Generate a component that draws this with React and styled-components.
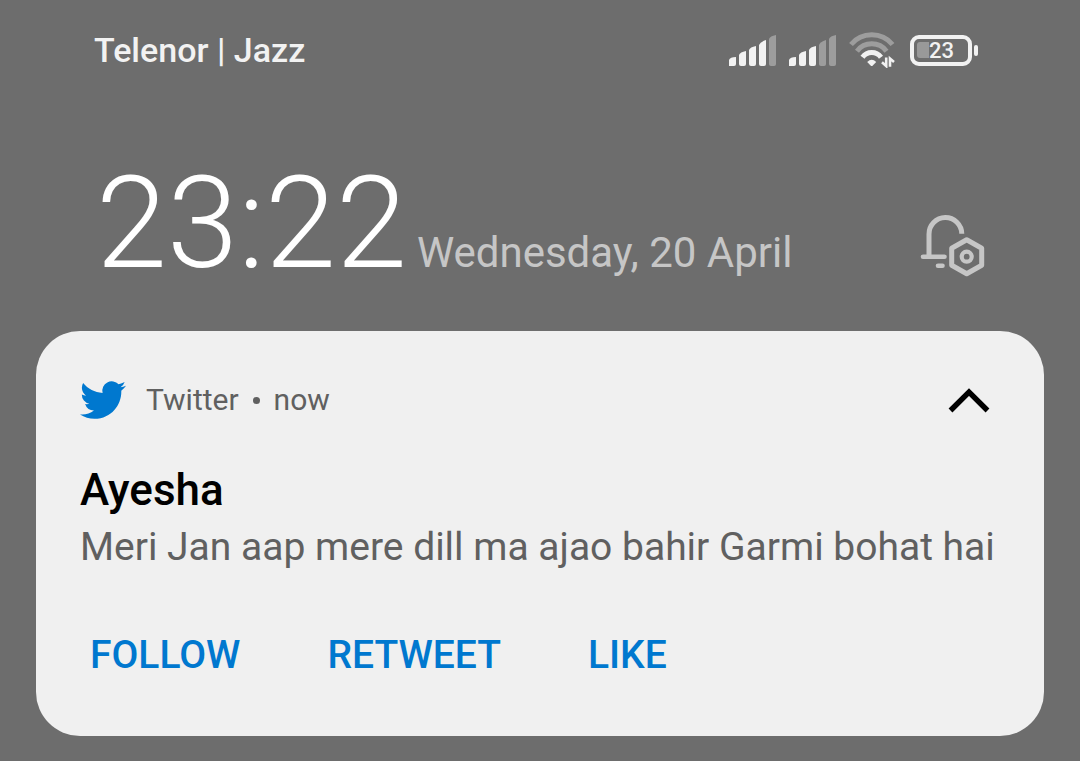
import React from 'react'
import styled, { createGlobalStyle } from 'styled-components'

const bars = [
    'M0 31V25Q1 22 7 22V29Q7 31 5 31H2Q0 31 0 31Z',
    'M10 29V20Q11 17 17 16V29Q17 31 15 31H12Q10 31 10 29Z',
    'M20 29V15Q21 12 27 11V29Q27 31 25 31H22Q20 31 20 29Z',
    'M30 29V10Q31 7 37 5V29Q37 31 35 31H32Q30 31 30 29Z',
    'M40 29V4Q41 1 47 0V29Q47 31 45 31H42Q40 31 40 29Z',
]

const Signal = ({ level }) => (
    <svg width="48" height="31" viewBox="0 0 48 31" aria-label="Signal">
        {bars.map((d, i) => (
            <path key={d} d={d} fill={i < level ? '#f2f2f2' : '#9d9d9d'} />
        ))}
    </svg>
)

const Wifi = () => (
    <svg width="49" height="36" viewBox="0 0 49 36" fill="none" aria-label="Wi-Fi">
        <path d="M2 12.5A27 27 0 0 1 43.5 12.5" stroke="#9d9d9d" strokeWidth="5" />
        <path d="M8 19.2A18.5 18.5 0 0 1 37.5 19.2" stroke="#9d9d9d" strokeWidth="5" />
        <path d="M13.5 25.2A11.5 11.5 0 0 1 32 25.2" stroke="#f2f2f2" strokeWidth="5" />
        <path d="M18.2 30Q22.7 25.5 27.2 30L23.8 33.6Q22.7 34.6 21.6 33.6Z" fill="#f2f2f2" />
        <path d="M37.2 25.5V34L33 30.2" stroke="#f2f2f2" strokeWidth="2.6" />
        <path d="M41 34.8V26.6L45 30" stroke="#f2f2f2" strokeWidth="2.6" />
    </svg>
)

const BellSettings = () => (
    <svg width="68" height="66" viewBox="0 0 68 66" fill="none" stroke="#c6c6c6" strokeWidth="5" aria-hidden="true">
        <path d="M11 44V22.2A16.4 16.4 0 0 1 43.8 21.8" />
        <path d="M5 44.8H26.5M20 53.8H24.5" strokeLinecap="round" strokeWidth="4.6" />
        <path d="M48.7 27.7L63.7 36.2V53.2L48.7 61.7L33.7 53.2V36.2Z" strokeLinejoin="round" />
        <circle cx="48.7" cy="44.7" r="5" strokeWidth="4.2" />
    </svg>
)

const Bird = () => (
    <svg width="46" height="46" viewBox="0 0 24 24" fill="#0078cf" aria-hidden="true">
        <path d="M23.953 4.57a10 10 0 01-2.825.775 4.958 4.958 0 002.163-2.723c-.951.555-2.005.959-3.127 1.184a4.92 4.92 0 00-8.384 4.482C7.69 8.095 4.067 6.13 1.64 3.162a4.822 4.822 0 00-.666 2.475c0 1.71.87 3.213 2.188 4.096a4.904 4.904 0 01-2.228-.616v.06a4.923 4.923 0 003.946 4.827 4.996 4.996 0 01-2.212.085 4.936 4.936 0 004.604 3.417 9.867 9.867 0 01-6.102 2.105c-.39 0-.779-.023-1.17-.067a13.995 13.995 0 007.557 2.209c9.053 0 13.998-7.496 13.998-13.985 0-.21 0-.42-.015-.63A9.935 9.935 0 0024 4.59z" />
    </svg>
)

const App = () => {
    return (
        <Container>
            <GlobalStyle />
            <StatusBar>
                <Carrier>Telenor | Jazz</Carrier>
                <StatusIcons>
                    <Signal level={4} />
                    <Signal level={3} />
                    <Wifi />
                    <Battery>
                        <BatteryBody>
                            <BatteryLevel />
                            23
                        </BatteryBody>
                        <BatteryTip />
                    </Battery>
                </StatusIcons>
            </StatusBar>
            <Header>
                <Time>23:22</Time>
                <Today>Wednesday, 20 April</Today>
                <SettingsButton aria-label="Notification settings">
                    <BellSettings />
                </SettingsButton>
            </Header>
            <Card>
                <CardTop>
                    <Bird />
                    <Source>
                        <span>Twitter</span>
                        <Dot />
                        <span>now</span>
                    </Source>
                    <IconButton aria-label="Collapse">
                        <svg width="42" height="26" viewBox="0 0 42 26" fill="none" aria-hidden="true">
                            <path d="M2.5 23.5L21 5L39.5 23.5" stroke="#000" strokeWidth="5.4" />
                        </svg>
                    </IconButton>
                </CardTop>
                <Title>Ayesha</Title>
                <Message>Meri Jan aap mere dill ma ajao bahir Garmi bohat hai</Message>
                <Actions>
                    <Action>FOLLOW</Action>
                    <Action>RETWEET</Action>
                    <Action>LIKE</Action>
                </Actions>
            </Card>
        </Container>
    )
}

export default App

const GlobalStyle = createGlobalStyle`
    body {
        margin: 0;
        background: #6d6d6d;
        font-family: Roboto, "Liberation Sans", sans-serif;
    }
    * {
        box-sizing: border-box;
    }
    svg {
        display: block;
        flex-shrink: 0;
    }
`
const Container = styled.div`
    min-height: 100vh;
    padding: 28px 36px 24px;
    background: #6d6d6d;
`
const StatusBar = styled.div`
    display: flex;
    align-items: center;
    justify-content: space-between;
    height: 44px;
    padding: 0 66px 0 58px;
`
const Carrier = styled.div`
    font-size: 34px;
    font-weight: 500;
    line-height: 44px;
    color: #f2f2f2;
`
const StatusIcons = styled.div`
    display: flex;
    align-items: center;
    gap: 12px;
`
const Battery = styled.div`
    display: flex;
    align-items: center;
    gap: 2px;
`
const BatteryBody = styled.div`
    display: flex;
    align-items: center;
    width: 62px;
    height: 31px;
    padding-left: 3px;
    border: 4px solid #f2f2f2;
    border-radius: 9px;
    font-size: 22px;
    font-weight: 500;
    line-height: 23px;
    color: #f2f2f2;
`
const BatteryLevel = styled.div`
    width: 12px;
    height: 16px;
    border-radius: 3px 0 0 3px;
    background: #999;
`
const BatteryTip = styled.div`
    width: 4px;
    height: 11px;
    border-radius: 2px;
    background: #f2f2f2;
`
const Header = styled.div`
    display: flex;
    align-items: baseline;
    height: 259px;
    padding: 85px 58px 53px 60px;
`
const Time = styled.div`
    font-size: 128px;
    font-weight: 300;
    line-height: 132px;
    color: #fff;
`
const Today = styled.div`
    flex: 1;
    margin-left: 10px;
    font-size: 42px;
    line-height: 48px;
    color: #c6c6c6;
    white-space: nowrap;
`
const IconButton = styled.button`
    padding: 0;
    border: 0;
    background: none;
    cursor: pointer;
`
const SettingsButton = styled(IconButton)`
    align-self: flex-end;
`
const Card = styled.div`
    padding: 44px 44px 57px;
    border-radius: 44px;
    background: #f0f0f0;
`
const CardTop = styled.div`
    display: flex;
    align-items: center;
    height: 50px;
    padding-right: 10px;
`
const Source = styled.div`
    display: flex;
    flex: 1;
    align-items: center;
    gap: 14px;
    margin-left: 20px;
    font-size: 30px;
    line-height: 40px;
    color: #606060;
`
const Dot = styled.div`
    width: 7px;
    height: 7px;
    border-radius: 50%;
    background: #606060;
`
const Title = styled.div`
    margin-top: 37px;
    font-size: 44px;
    font-weight: 500;
    line-height: 56px;
    color: #000;
`
const Message = styled.div`
    font-size: 39px;
    line-height: 58px;
    color: #606060;
`
const Actions = styled.div`
    display: flex;
    gap: 87px;
    margin-top: 55px;
    padding-left: 10px;
`
const Action = styled.button`
    padding: 0;
    border: 0;
    background: none;
    font-family: inherit;
    font-size: 39px;
    font-weight: 500;
    line-height: 48px;
    color: #0078cf;
    cursor: pointer;
`
